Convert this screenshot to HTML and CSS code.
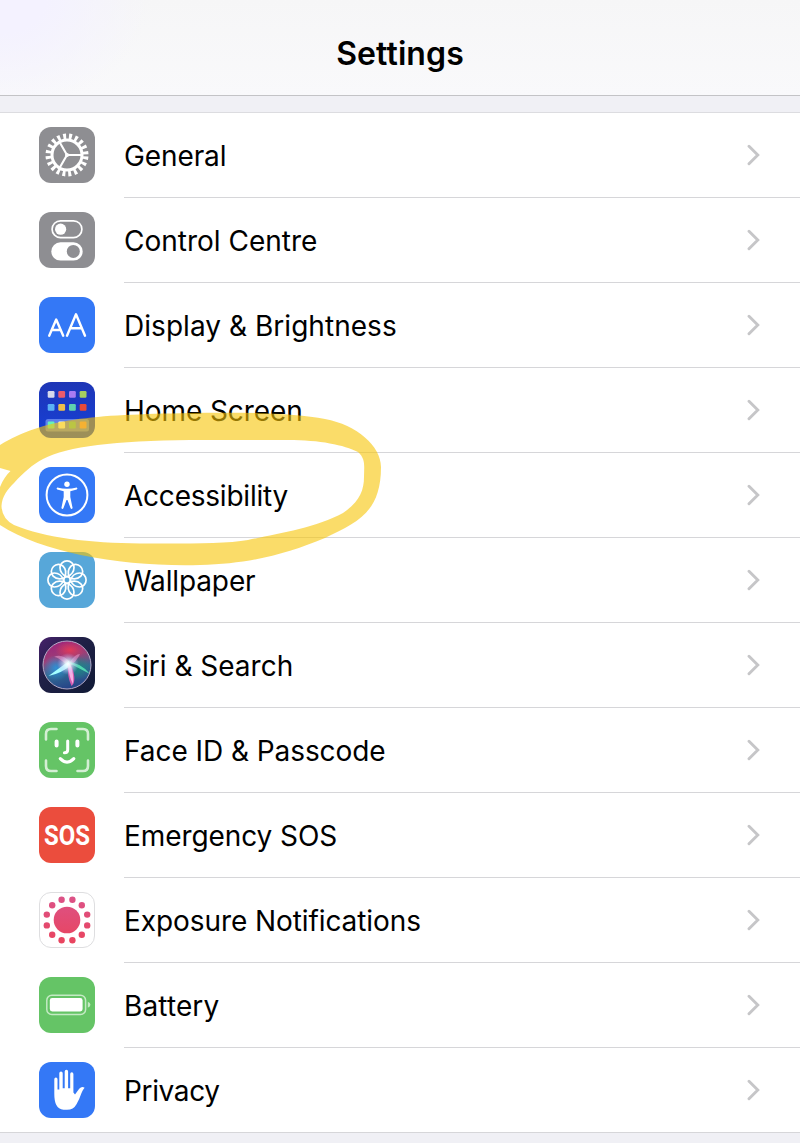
FILE: index.html
```html
<!DOCTYPE html>
<html lang="en">
<head>
<meta charset="utf-8">
<title>Settings</title>
<link rel="stylesheet" href="styles.css">
</head>
<body>
<svg class="defs" width="0" height="0" aria-hidden="true">
  <symbol id="chevron" viewBox="0 0 14 22"><path d="M2 2.2 L10.8 11 L2 19.8" fill="none" stroke="#c6c6c8" stroke-width="2.9" stroke-linecap="round" stroke-linejoin="miter"/></symbol>
  <path id="petal" d="M28 24.7 C23.5 22.8 21 19 21 15.4 C21 11.7 24.2 8.9 28 8.9 C31.8 8.9 35 11.7 35 15.4 C35 19 32.5 22.8 28 24.7Z"/>
</svg>
<header class="header"><h1 class="title">Settings</h1></header>
<main class="list">
  <div class="row">
    <svg class="icon" viewBox="0 0 56 56"><rect width="56" height="56" rx="12" fill="#8e8e92"/>
      <g fill="none" stroke="#fff"><circle cx="28" cy="28" r="15" stroke-width="3"/><circle cx="28" cy="28" r="18.5" stroke-width="6" stroke-dasharray="2.9 2.912" stroke-dashoffset="-1.45"/><path d="M28 28H43M28 28L20.5 15M28 28L20.5 41" stroke-width="2.1"/></g><circle cx="28" cy="28" r="2" fill="#fff"/></svg>
    <div class="cell"><span class="label l1">General</span><svg class="chev"><use href="#chevron"/></svg></div>
  </div>
  <div class="row">
    <svg class="icon" viewBox="0 0 56 56"><rect width="56" height="56" rx="12" fill="#8e8e92"/>
      <rect x="13.1" y="8.8" width="29.8" height="16.8" rx="8.4" fill="none" stroke="#fff" stroke-width="1.7"/><circle cx="21.6" cy="17.2" r="5.6" fill="#fff"/><rect x="12.3" y="30.2" width="31.4" height="18.4" rx="9.2" fill="#fff"/><circle cx="34.3" cy="39.4" r="6.5" fill="#8e8e92"/></svg>
    <div class="cell"><span class="label l2">Control Centre</span><svg class="chev"><use href="#chevron"/></svg></div>
  </div>
  <div class="row">
    <svg class="icon" viewBox="0 0 56 56"><rect width="56" height="56" rx="12" fill="#3478f6"/>
      <g fill="none" stroke="#fff" stroke-width="2.4" stroke-linecap="round" stroke-linejoin="round"><path d="M10.2 38.7L17.2 22.5L24.2 38.7M12.8 33H21.6"/><path d="M28 38.7L37 17.3L46 38.7M31.2 31.2H42.8"/></g></svg>
    <div class="cell"><span class="label l3">Display &amp; Brightness</span><svg class="chev"><use href="#chevron"/></svg></div>
  </div>
  <div class="row">
    <svg class="icon" viewBox="0 0 56 56"><defs><linearGradient id="home" x2="0" y2="1"><stop stop-color="#1e36b6"/><stop offset="1" stop-color="#1640d8"/></linearGradient></defs><rect width="56" height="56" rx="12" fill="url(#home)"/>
      <rect x="6.5" y="37" width="43.5" height="12.4" rx="2.5" fill="#5f80e8"/>
      <rect x="8.7" y="9" width="6.8" height="6.8" rx="1.2" fill="#d5d9ec"/><rect x="19.3" y="9" width="6.8" height="6.8" rx="1.2" fill="#eb5b6c"/><rect x="30" y="9" width="6.8" height="6.8" rx="1.2" fill="#a97bf2"/><rect x="40.7" y="9" width="6.8" height="6.8" rx="1.2" fill="#a5d060"/>
      <rect x="8.7" y="22" width="6.8" height="6.8" rx="1.2" fill="#5bb2f5"/><rect x="19.3" y="22" width="6.8" height="6.8" rx="1.2" fill="#edc04b"/><rect x="30" y="22" width="6.8" height="6.8" rx="1.2" fill="#5fd3af"/><rect x="40.7" y="22" width="6.8" height="6.8" rx="1.2" fill="#e84a38"/>
      <rect x="8.7" y="39.6" width="6.8" height="6.8" rx="1.2" fill="#67f1ba"/><rect x="19.3" y="39.6" width="6.8" height="6.8" rx="1.2" fill="#fffde0"/><rect x="30" y="39.6" width="6.8" height="6.8" rx="1.2" fill="#63c5a0"/><rect x="40.7" y="39.6" width="6.8" height="6.8" rx="1.2" fill="#f49576"/></svg>
    <div class="cell"><span class="label l4">Home Screen</span><svg class="chev"><use href="#chevron"/></svg></div>
  </div>
  <div class="row">
    <svg class="icon" viewBox="0 0 56 56"><rect width="56" height="56" rx="12" fill="#3478f6"/>
      <circle cx="28" cy="28" r="20.4" fill="none" stroke="#fff" stroke-width="2"/><circle cx="28" cy="17.2" r="2.7" fill="#fff"/>
      <path d="M18.3 20.5 Q28 22.9 37.7 20.5 Q39.2 21.6 37.8 22.6 L31.3 24.2 L31.3 30 L33.6 41 Q32.7 42.6 31.6 41.3 L28.5 33 H27.5 L24.4 41.3 Q23.3 42.6 22.4 41 L24.7 30 L24.7 24.2 L18.2 22.6 Q16.8 21.6 18.3 20.5Z" fill="#fff"/></svg>
    <div class="cell"><span class="label l5">Accessibility</span><svg class="chev"><use href="#chevron"/></svg></div>
  </div>
  <div class="row">
    <svg class="icon" viewBox="0 0 56 56"><rect width="56" height="56" rx="12" fill="#57a7d9"/>
      <g fill="none" stroke="#fff" stroke-width="1.7"><use href="#petal"/><use href="#petal" transform="rotate(45 28 28)"/><use href="#petal" transform="rotate(90 28 28)"/><use href="#petal" transform="rotate(135 28 28)"/><use href="#petal" transform="rotate(180 28 28)"/><use href="#petal" transform="rotate(225 28 28)"/><use href="#petal" transform="rotate(270 28 28)"/><use href="#petal" transform="rotate(315 28 28)"/><circle cx="28" cy="28" r="3.3"/></g></svg>
    <div class="cell"><span class="label l6">Wallpaper</span><svg class="chev"><use href="#chevron"/></svg></div>
  </div>
  <div class="row">
    <svg class="icon" viewBox="0 0 56 56">
      <defs>
        <linearGradient id="sbg" x1="0" y1="0" x2="1" y2="1"><stop stop-color="#47206b"/><stop offset=".4" stop-color="#202047"/><stop offset="1" stop-color="#101a35"/></linearGradient>
        <linearGradient id="orb" x1=".35" y1="0" x2=".6" y2="1"><stop stop-color="#9b247c"/><stop offset=".35" stop-color="#9c3f77"/><stop offset=".62" stop-color="#316d94"/><stop offset="1" stop-color="#263f86"/></linearGradient>
        <radialGradient id="red"><stop stop-color="#e03a5a"/><stop offset="1" stop-color="#e03a5a" stop-opacity="0"/></radialGradient>
        <radialGradient id="blue"><stop stop-color="#2f90d5"/><stop offset="1" stop-color="#2f90d5" stop-opacity="0"/></radialGradient>
        <radialGradient id="teal"><stop stop-color="#1d8581"/><stop offset="1" stop-color="#1d8581" stop-opacity="0"/></radialGradient>
        <radialGradient id="glow"><stop stop-color="#fff"/><stop offset=".3" stop-color="#e8f7ff" stop-opacity=".8"/><stop offset="1" stop-color="#baf" stop-opacity="0"/></radialGradient>
      </defs>
      <rect width="56" height="56" rx="12" fill="url(#sbg)"/><circle cx="28" cy="28" r="24" fill="url(#orb)"/>
      <ellipse cx="31" cy="13" rx="15" ry="9" fill="url(#red)"/><circle cx="17" cy="31" r="13" fill="url(#blue)"/><ellipse cx="39" cy="31" rx="13" ry="12" fill="url(#teal)"/>
      <path d="M28 28Q18 19 15 20Q23 16 31 25Q36 17 41 17Q38 24 31 29Z" fill="#db88ba" opacity=".7"/>
      <path d="M30 24L9.5 39Q22 36.5 31 29Z" fill="#a5ffff"/><path d="M28 25L51 37Q41 25 28 25Z" fill="#59e5b9" opacity=".85"/><path d="M29 27Q28 40 32.5 49Q38 45 33 30Z" fill="#d45bb0"/><path d="M29 28Q30 40 34 47Q35 36 31 27Z" fill="#f5aee2"/>
      <circle cx="29" cy="27" r="11" fill="url(#glow)"/><circle cx="28" cy="28" r="24" fill="none" stroke="#b5a9c7" stroke-width="1"/></svg>
    <div class="cell"><span class="label l7">Siri &amp; Search</span><svg class="chev"><use href="#chevron"/></svg></div>
  </div>
  <div class="row">
    <svg class="icon" viewBox="0 0 56 56"><rect width="56" height="56" rx="12" fill="#65c466"/>
      <g fill="none" stroke="#fff" stroke-linecap="round" stroke-linejoin="round"><path d="M7 17.5V12Q7 7 12 7H17.5M38.5 7H44Q49 7 49 12V17.5M49 38.5V44Q49 49 44 49H38.5M17.5 49H12Q7 49 7 44V38.5" stroke-width="2.6" opacity=".72"/><path d="M17.6 19.6V23.4M38.4 19.6V23.4" stroke-width="4"/><path d="M28.7 19V27.8Q28.7 30.8 25.4 30.8" stroke-width="3"/><path d="M21.3 36.7Q28 43.6 34.8 36.7" stroke-width="3.2"/></g></svg>
    <div class="cell"><span class="label l8">Face ID &amp; Passcode</span><svg class="chev"><use href="#chevron"/></svg></div>
  </div>
  <div class="row">
    <svg class="icon" viewBox="0 0 56 56"><rect width="56" height="56" rx="12" fill="#eb4d3d"/><text class="sos" x="5" y="38.3" textLength="46" lengthAdjust="spacingAndGlyphs">SOS</text></svg>
    <div class="cell"><span class="label l9">Emergency SOS</span><svg class="chev"><use href="#chevron"/></svg></div>
  </div>
  <div class="row">
    <svg class="icon" viewBox="0 0 56 56"><defs><linearGradient id="exp" gradientUnits="userSpaceOnUse" x1="0" y1="5" x2="0" y2="51"><stop stop-color="#dc5287"/><stop offset="1" stop-color="#e9445e"/></linearGradient></defs><rect x=".5" y=".5" width="55" height="55" rx="11.5" fill="#fff" stroke="#dedee0"/>
      <g fill="url(#exp)"><circle cx="28" cy="28" r="13.3"/><circle cx="33.4" cy="7.8" r="3.2"/><circle cx="42.8" cy="13.2" r="3.2"/><circle cx="48.2" cy="22.6" r="3.2"/><circle cx="48.2" cy="33.4" r="3.2"/><circle cx="42.8" cy="42.8" r="3.2"/><circle cx="33.4" cy="48.2" r="3.2"/><circle cx="22.6" cy="48.2" r="3.2"/><circle cx="13.2" cy="42.8" r="3.2"/><circle cx="7.8" cy="33.4" r="3.2"/><circle cx="7.8" cy="22.6" r="3.2"/><circle cx="13.2" cy="13.2" r="3.2"/><circle cx="22.6" cy="7.8" r="3.2"/></g></svg>
    <div class="cell"><span class="label l10">Exposure Notifications</span><svg class="chev"><use href="#chevron"/></svg></div>
  </div>
  <div class="row">
    <svg class="icon" viewBox="0 0 56 56"><rect width="56" height="56" rx="12" fill="#65c466"/>
      <rect x="7.8" y="18.2" width="38.8" height="19.2" rx="5" fill="none" stroke="#c4eac4" stroke-width="1.5"/><rect x="10.8" y="21.1" width="32.8" height="13.4" rx="2.4" fill="#fff"/><path d="M48.8 24.8Q51.4 26 51.4 27.8Q51.4 29.6 48.8 30.8Z" fill="#c4eac4"/></svg>
    <div class="cell"><span class="label l11">Battery</span><svg class="chev"><use href="#chevron"/></svg></div>
  </div>
  <div class="row">
    <svg class="icon" viewBox="0 0 56 56"><rect width="56" height="56" rx="12" fill="#3478f6"/>
      <path d="M15.3 17.3Q15.3 15.6 16.9 15.6Q18.5 15.6 18.5 17.3V27.5H20.3V11.2Q20.3 9.4 22 9.4Q23.7 9.4 23.7 11.2V26.2H25.7V9.6Q25.7 7.8 27.4 7.8Q29.1 7.8 29.1 9.6V26.2H31.2V12Q31.2 10.3 32.8 10.3Q34.4 10.3 34.4 12V30.5L36 32.5L40.2 26.8Q42.8 24 45.6 25.8Q43.5 28.2 42.5 31Q40.5 37 37.5 42.2Q34.5 47.8 28 47.8H24.5Q19.5 47.5 17.2 42.8Q15.3 38.8 15.3 32Z" fill="#fff"/></svg>
    <div class="cell"><span class="label l12">Privacy</span><svg class="chev"><use href="#chevron"/></svg></div>
  </div>
</main>
<svg class="marker" viewBox="0 0 800 1143" aria-hidden="true"><path fill-rule="evenodd" d="M0 445C45 418 90 415 190 413C245 412 295 413 325 419C357 425 381 446 381 467C381 512 358 522 325 538C286 554 250 564 200 565C125 567 45 554 0 525V487C3 480 6 475 10.5 471L0 468Z M1.5 506C2 496 8 489 14 483C24 472 32 465 43 459C68 446 115 441 190 440H288C320 440 344 445 358 452C366 459 364 467 364 477C364 491 359 502 343 513C316 528 275 534 248 540C225 544 185 543.5 140 543.5C90 543 45 538 14 525Q2 519 1.5 506Z"/></svg>
</body>
</html>
```

FILE: styles.css
```css
body {
  margin: 0;
  background: #f0f0f5;
  font-family: Inter, "Liberation Sans", sans-serif;
  color: #000;
  position: relative;
  height: 1143px;
  overflow: hidden;
}
.defs { position: absolute; }
.header {
  box-sizing: border-box;
  height: 96px;
  padding-top: 12px;
  display: flex;
  align-items: center;
  justify-content: center;
  border-bottom: 1px solid #c3c3c6;
  background: radial-gradient(ellipse 150px 110px at 0 0, #f4f2ff 0, #f4f2ff 30%, rgba(244, 242, 255, 0) 100%), linear-gradient(#f6f6f7, #f9f9fb);
}
.title {
  margin: 0;
  font-size: 32px;
  font-weight: 600;
  line-height: 40px;
  letter-spacing: 0.1px;
}
.list {
  margin-top: 16px;
  background: #fff;
  border-top: 1px solid #dcdce0;
}
.row {
  display: flex;
  align-items: stretch;
  height: 85px;
  padding-left: 38.5px;
}
.icon {
  flex: none;
  width: 56px;
  height: 56px;
  margin: 14px 29.5px 0 0;
  overflow: visible;
}
.cell {
  flex: 1;
  display: flex;
  align-items: center;
  justify-content: space-between;
  box-sizing: border-box;
  border-bottom: 1px solid #d6d6d9;
  padding-right: 39.5px;
}
.row:last-child { border-bottom: 1px solid #d6d6d9; height: 84px; }
.row:last-child .cell { border-bottom: 0; }
.label {
  font-size: 28px;
  line-height: 40px;
  white-space: nowrap;
  padding-top: 1px;
}
.l1 { letter-spacing: -0.1px; }
.l3 { letter-spacing: 0.04px; }
.l4 { letter-spacing: -0.08px; }
.l5 { letter-spacing: -0.22px; }
.l6 { letter-spacing: -0.12px; }
.l8 { letter-spacing: -0.06px; }
.l9 { letter-spacing: -0.08px; }
.l10 { letter-spacing: -0.08px; }
.l11 { letter-spacing: 0.12px; }
.l12 { letter-spacing: -0.35px; }
.chev { width: 14px; height: 22px; }
.sos {
  font-family: Roboto, sans-serif;
  font-weight: 700;
  font-size: 28.5px;
  fill: #fff;
}
.marker {
  position: absolute;
  left: 0;
  top: 0;
  width: 800px;
  height: 1143px;
  fill: rgba(247, 197, 5, 0.6);
}
```
